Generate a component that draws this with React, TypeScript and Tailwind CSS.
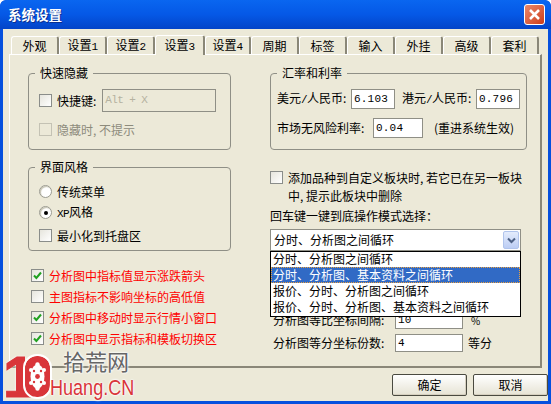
import { ReactNode } from "react";

const cjk = "font-['Noto_Sans_CJK_SC','Liberation_Sans',sans-serif]";
const mono = "font-['Liberation_Mono',monospace] text-[11px] tracking-[-0.6px]";

function Num({ children }: { children: ReactNode }) {
  return <span className={mono}>{children}</span>;
}

// the old bitmap font gives the comma a full half-width cell
function Comma() {
  return <span className="inline-block w-[6px]">,</span>;
}

function Tab({ label, num, width, active }: { label: string; num?: string; width: string; active?: boolean }) {
  return (
    <div
      className={`${width} relative flex justify-center items-center border-l border-t border-white rounded-t-[3px] border-r-2 border-r-[#8a8778] ${
        active ? "h-[20px] bg-[#ece9d8] z-10 -mb-px" : "h-[18px] bg-[#ece9d8]"
      }`}
    >
      <span className="leading-none">
        {label}
        {num && <Num>{num}</Num>}
      </span>
    </div>
  );
}

function Check({ checked, disabled }: { checked?: boolean; disabled?: boolean }) {
  return (
    <div
      className={`w-[13px] h-[13px] shrink-0 border flex items-center justify-center ${
        disabled ? "border-[#c4c2b4] bg-[#ece9d8]" : "border-[#8a8d8a] bg-gradient-to-br from-[#e6e5dd] to-white"
      }`}
    >
      {checked && (
        <svg width="9" height="9" viewBox="0 0 9 9">
          <path d="M1 4.5 L3.4 7 L8 1.5" fill="none" stroke="#21a121" strokeWidth="2" />
        </svg>
      )}
    </div>
  );
}

function Radio({ checked }: { checked?: boolean }) {
  return (
    <div className="w-[13px] h-[13px] rounded-full shrink-0 border border-[#9b9b90] bg-white flex items-center justify-center shadow-[inset_1px_1px_1px_#c5c2b0]">
      {checked && <div className="w-[4px] h-[4px] rounded-full bg-black" />}
    </div>
  );
}

function Group({ title, className, children }: { title: string; className: string; children: ReactNode }) {
  return (
    <div className={`relative border border-[#8f8f86] rounded-[4px] ${className}`}>
      <div className="absolute -top-[9px] left-[6px] px-[5px] bg-[#ece9d8] leading-[16px]">{title}</div>
      {children}
    </div>
  );
}

function Field({ value, className }: { value: string; className: string }) {
  return (
    <div className={`${className} border border-[#8f8f86] bg-white flex items-center pl-[2px]`}>
      <span className="font-['Liberation_Mono',monospace] text-[11px] tracking-[0.2px]">{value}</span>
    </div>
  );
}

function RedRow({ label, checked }: { label: string; checked?: boolean }) {
  return (
    <div className="flex items-center gap-[5px] h-[13px] text-[#ff0000]">
      <Check checked={checked} />
      <span>{label}</span>
    </div>
  );
}

function Button({ label }: { label: string }) {
  return (
    <div className="w-[75px] h-[22px] border border-[#4a4a40] rounded-[2px] bg-gradient-to-b from-white to-[#e6e3d4] flex items-center justify-center shadow-[inset_-1px_-1px_0_#d6d0c0]">
      {label}
    </div>
  );
}

export default function App() {
  return (
    <div className={`${cjk} w-[551px] h-[404px] relative overflow-hidden text-[12px] text-black bg-[#0650de] p-[3px] pt-0 rounded-t-[6px]`}>
      {/* Title bar */}
      <div className="h-[29px] -mx-[3px] px-[8px] flex items-center justify-between bg-gradient-to-b from-[#0a66f0] via-[#0558e6] to-[#0344c8] rounded-t-[6px]">
        <span className="text-white font-bold text-[13.5px] leading-none [text-shadow:1px_1px_0_#0a2f90]">系统设置</span>
        <div className="w-[21px] h-[21px] -mr-[2px] rounded-[3px] border border-white bg-gradient-to-br from-[#e8876a] to-[#cc3a12] flex items-center justify-center">
          <svg width="13" height="13" viewBox="0 0 13 13">
            <path d="M2 2 L11 11 M11 2 L2 11" stroke="white" strokeWidth="2.6" />
          </svg>
        </div>
      </div>

      {/* Body */}
      <div className="h-[372px] bg-[#ece9d8] px-[6px] pt-[6px] flex flex-col">
        {/* Tabs */}
        <div className="flex items-end h-[19px] pl-[2px]">
          <Tab label="外观" width="w-[48px]" />
          <Tab label="设置" num="1" width="w-[48px]" />
          <Tab label="设置" num="2" width="w-[48px]" />
          <Tab label="设置" num="3" width="w-[50px]" active />
          <Tab label="设置" num="4" width="w-[46px]" />
          <Tab label="周期" width="w-[48px]" />
          <Tab label="标签" width="w-[48px]" />
          <Tab label="输入" width="w-[48px]" />
          <Tab label="外挂" width="w-[48px]" />
          <Tab label="高级" width="w-[48px]" />
          <Tab label="套利" width="w-[48px]" />
        </div>

        {/* Panel */}
        <div className="h-[314px] w-[533px] border-t border-l border-white border-r-2 border-r-[#8a8778] border-b-2 border-b-[#8a8778] flex pl-[18px] pt-[18px]">
          {/* Left column */}
          <div className="w-[203px] shrink-0 flex flex-col">
            <Group title="快速隐藏" className="h-[77px] pl-[10px] pt-[15px] flex flex-col">
              <div className="flex items-center gap-[5px] h-[23px]">
                <Check />
                <span>快捷键:</span>
                <div className={`ml-[1px] w-[114px] h-[23px] border border-[#8f8f86] flex items-center pl-[2px] text-[#b5b2a0] ${mono}`}>Alt + X</div>
              </div>
              <div className="flex items-center gap-[5px] h-[13px] mt-[11px] text-[#8d8b7c]">
                <Check disabled />
                <span>隐藏时<Comma />不提示</span>
              </div>
            </Group>

            <Group title="界面风格" className="h-[84px] mt-[17px] pl-[10px] pt-[17px] flex flex-col">
              <div className="flex items-center gap-[5px] h-[13px]">
                <Radio />
                <span>传统菜单</span>
              </div>
              <div className="flex items-center gap-[5px] h-[13px] mt-[8px]">
                <Radio checked />
                <span><Num>XP</Num>风格</span>
              </div>
              <div className="flex items-center gap-[5px] h-[13px] mt-[10px]">
                <Check />
                <span>最小化到托盘区</span>
              </div>
            </Group>

            <div className="mt-[18px] ml-[3px] flex flex-col gap-[8px]">
              <RedRow label="分析图中指标值显示涨跌箭头" checked />
              <RedRow label="主图指标不影响坐标的高低值" />
              <RedRow label="分析图中移动时显示行情小窗口" checked />
              <RedRow label="分析图中显示指标和模板切换区" checked />
            </div>
          </div>

          {/* Right column */}
          <div className="w-[257px] ml-[39px] shrink-0 flex flex-col relative">
            <Group title="汇率和利率" className="h-[77px] pt-[15px] pl-[6px] flex flex-col">
              <div className="flex items-center h-[20px]">
                <span className="w-[74px]">美元<Num>/</Num>人民币:</span>
                <Field value="6.103" className="w-[44px] h-[20px]" />
                <span className="ml-[7px] w-[74px]">港元<Num>/</Num>人民币:</span>
                <Field value="0.796" className="w-[44px] h-[20px]" />
              </div>
              <div className="flex items-center h-[20px] mt-[9px]">
                <span className="w-[96px]">市场无风险利率:</span>
                <Field value="0.04" className="w-[50px] h-[20px]" />
                <span className="ml-[11px]">(重进系统生效)</span>
              </div>
            </Group>

            <div className="mt-[21px] flex gap-[5px]">
              <Check />
              <span className="leading-[18px] -mt-[2px] w-[240px]">
                添加品种到自定义板块时<Comma />若它已在另一板块
                <br />
                中<Comma />提示此板块中删除
              </span>
            </div>
            <div className="mt-[3px] leading-[16px]">回车键一键到底操作模式选择：</div>

            <div className="mt-[5px] w-[251px] h-[22px] border border-[#8f8f86] bg-white flex items-center justify-between pl-[3px] pr-[1px]">
              <span>分时、分析图之间循环</span>
              <div className="w-[16px] h-[18px] rounded-[2px] border border-[#b0c4ec] bg-gradient-to-b from-[#e4ecfc] to-[#bccdf4] flex items-center justify-center">
                <svg width="9" height="7" viewBox="0 0 9 7">
                  <path d="M1 1.5 L4.5 5 L8 1.5" fill="none" stroke="#4d6185" strokeWidth="2" />
                </svg>
              </div>
            </div>

            {/* Open dropdown */}
            <div className="absolute left-0 top-[178px] w-[251px] h-[66px] border border-black bg-white z-20 leading-[16px] pl-[1px]">
              <div className="h-[15px] leading-[14px] pl-[1px]">分时、分析图之间循环</div>
              <div className="h-[16px] -ml-[1px] pl-[2px] bg-[#316ac5] text-white outline-1 -outline-offset-1 outline-dotted outline-[#e8a040]">分时、分析图、基本资料之间循环</div>
              <div className="h-[16px] pl-[1px]">报价、分时、分析图之间循环</div>
              <div className="h-[16px] pl-[1px]">报价、分时、分析图、基本资料之间循环</div>
            </div>

            <div className="mt-[60px] flex items-center h-[18px] pl-[3px]">
              <span className="w-[122px]">分析图等比坐标间隔:</span>
              <Field value="10" className="w-[68px] h-[18px]" />
              <span className="ml-[8px] text-[10px]">%</span>
            </div>
            <div className="mt-[5px] flex items-center h-[18px] pl-[3px]">
              <span className="w-[122px]">分析图等分坐标份数:</span>
              <Field value="4" className="w-[68px] h-[18px]" />
              <span className="ml-[5px]">等分</span>
            </div>
          </div>
        </div>

        {/* Bottom buttons */}
        <div className="flex justify-end gap-[6px] mt-[6px] w-[539px]">
          <Button label="确定" />
          <Button label="取消" />
        </div>
      </div>

      {/* Watermark */}
      <div className="absolute left-[5px] top-[350px] w-[132px] h-[50px] pointer-events-none">
        <span className="absolute -left-[2px] top-[2px] font-['Liberation_Sans'] font-bold text-[58px] leading-[50px] text-[#d9353a] [-webkit-text-stroke:1px_#d9353a] [text-shadow:0_0_2px_white,0_0_3px_white]">1</span>
        <span className="absolute left-[20px] top-[6px] w-[25px] h-[41px] rounded-[12px] bg-[#d9353a] outline-2 outline-white flex items-center justify-center">
          <svg width="17" height="29" viewBox="0 0 17 29">
            <ellipse cx="8.5" cy="14.5" rx="7" ry="12" fill="white" />
            <circle cx="8.5" cy="2.5" r="2.2" fill="white" />
            <circle cx="8.5" cy="26.5" r="2.2" fill="white" />
            <circle cx="2" cy="8" r="2" fill="white" />
            <circle cx="15" cy="8" r="2" fill="white" />
            <circle cx="2" cy="21" r="2" fill="white" />
            <circle cx="15" cy="21" r="2" fill="white" />
            <circle cx="8.5" cy="14.5" r="2.4" fill="#d9353a" />
            <circle cx="5" cy="9" r="1.2" fill="#d9353a" />
            <circle cx="12" cy="9" r="1.2" fill="#d9353a" />
            <circle cx="5" cy="20" r="1.2" fill="#d9353a" />
            <circle cx="12" cy="20" r="1.2" fill="#d9353a" />
          </svg>
        </span>
        <span className="absolute left-[58px] top-[-3px] text-[22px] leading-[26px] font-normal text-[#666] [text-shadow:0_0_2px_white,0_0_2px_white,0_0_3px_white]">拾荒网</span>
        <span className="absolute left-[45px] top-[26px] origin-left scale-x-[0.82] font-['Liberation_Sans'] font-normal text-[22px] leading-[24px] text-[#d9353a] [text-shadow:0_0_2px_white,0_0_2px_white,0_0_3px_white]">Huang.CN</span>
      </div>
    </div>
  );
}
